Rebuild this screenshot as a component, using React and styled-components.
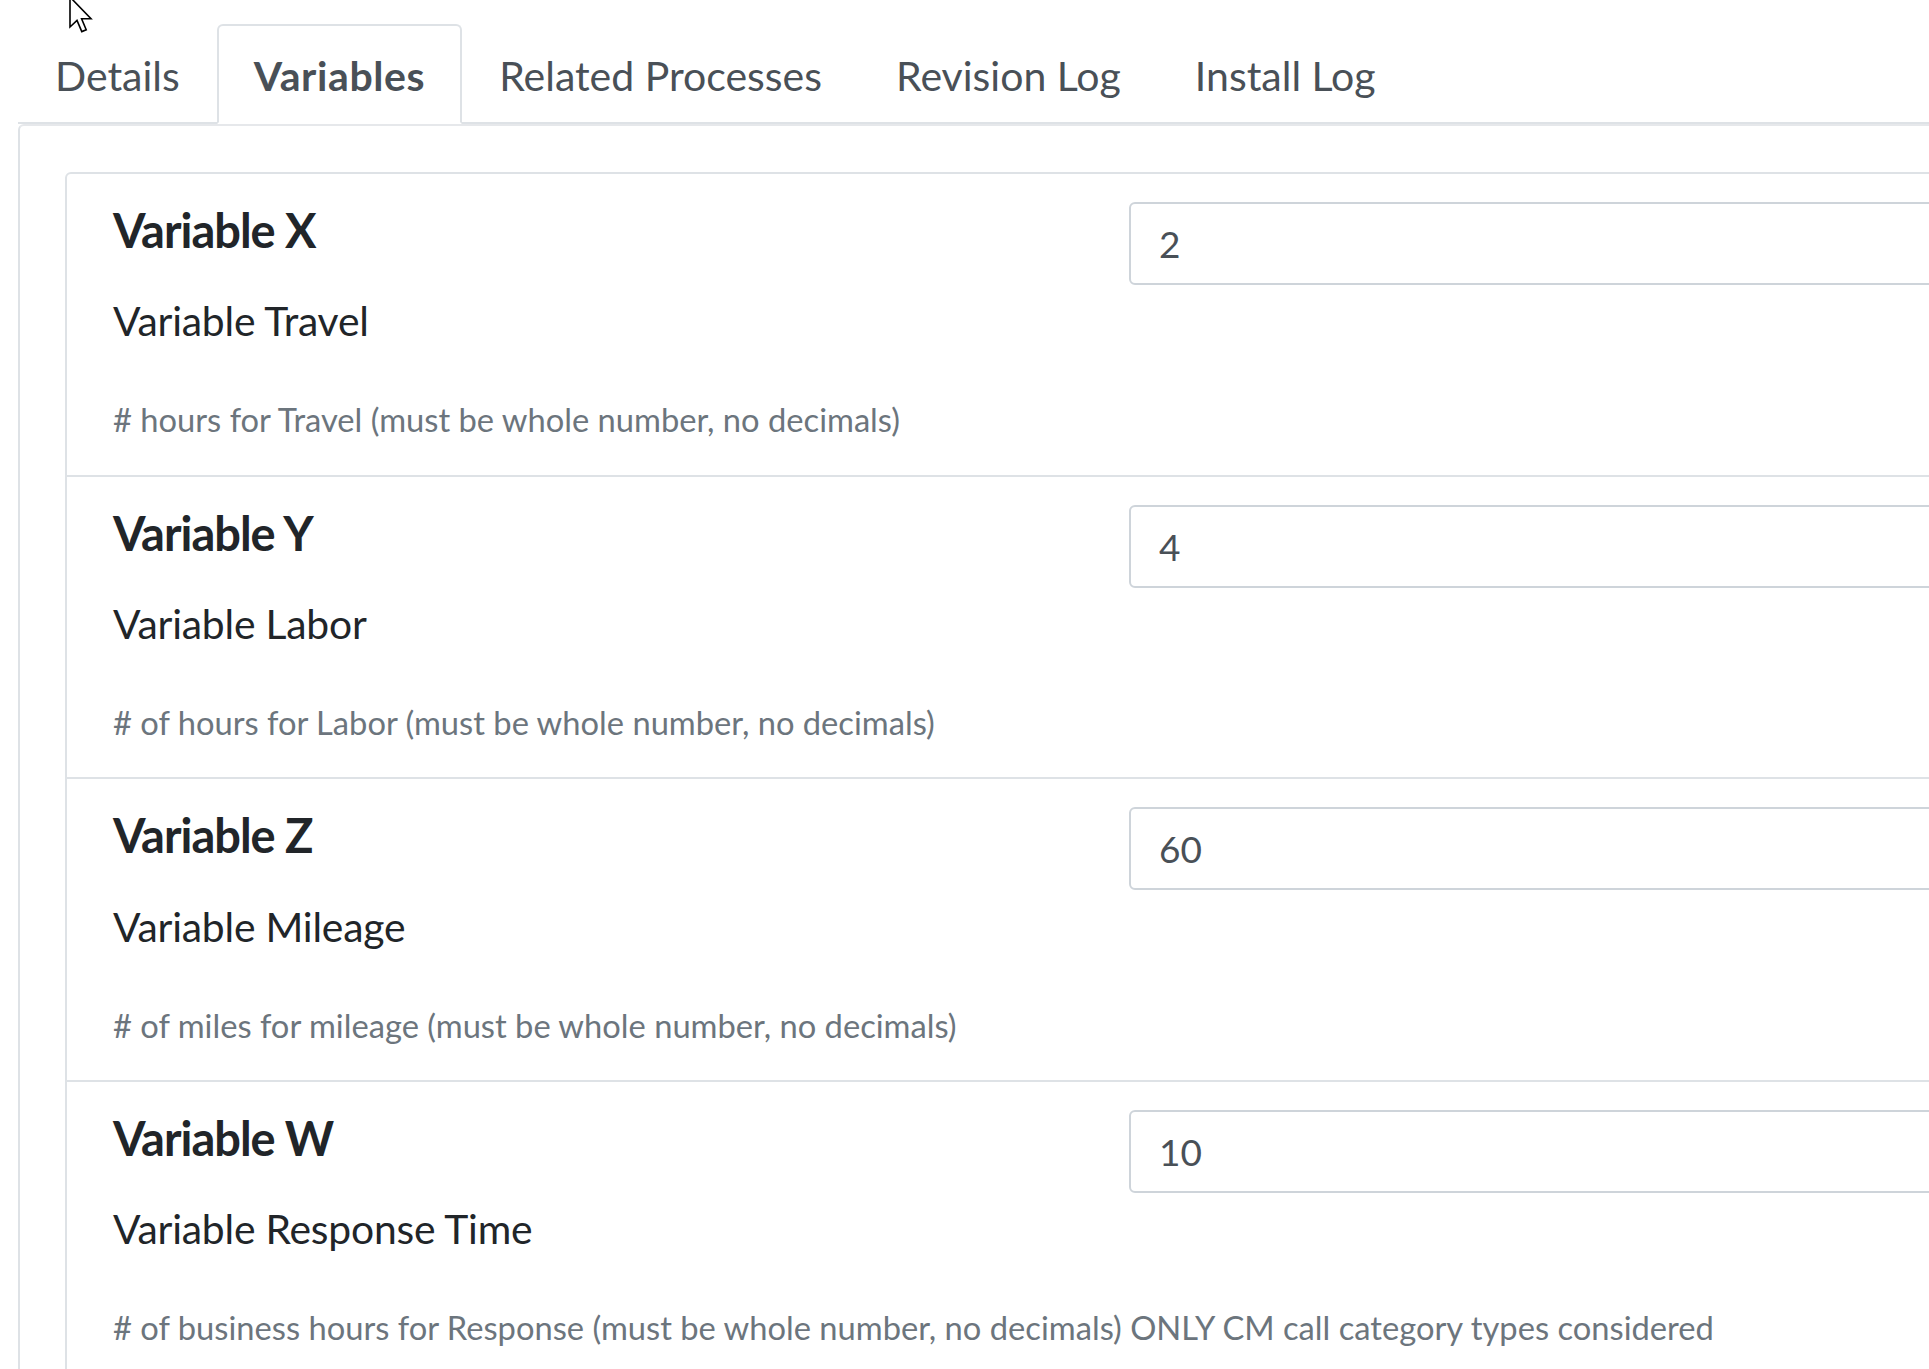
import React from 'react';
import styled, { createGlobalStyle } from 'styled-components';

const GlobalStyle = createGlobalStyle`
  html, body {
    margin: 0;
    padding: 0;
    overflow: hidden;
    background: #fff;
  }
  body {
    font-family: Lato, "Open Sans", sans-serif;
    color: #212529;
  }
  * {
    box-sizing: border-box;
  }
`;

const tabs = ['Details', 'Variables', 'Related Processes', 'Revision Log', 'Install Log'];

const variables = [
  {
    name: 'Variable X',
    label: 'Variable Travel',
    hint: '# hours for Travel (must be whole number, no decimals)',
    value: '2',
  },
  {
    name: 'Variable Y',
    label: 'Variable Labor',
    hint: '# of hours for Labor (must be whole number, no decimals)',
    value: '4',
  },
  {
    name: 'Variable Z',
    label: 'Variable Mileage',
    hint: '# of miles for mileage (must be whole number, no decimals)',
    value: '60',
  },
  {
    name: 'Variable W',
    label: 'Variable Response Time',
    hint: '# of business hours for Response (must be whole number, no decimals) ONLY CM call category types considered',
    value: '10',
  },
];

function Cursor() {
  return (
    <CursorMark width="26" height="38" viewBox="0 0 13 19">
      <path
        d="M0.5 0.5 L0.5 15.5 L4 12.2 L6.4 17.8 L8.6 16.9 L6.3 11.4 L11 11.4 Z"
        fill="#fff"
        stroke="#000"
        strokeWidth="0.8"
        strokeLinejoin="miter"
      />
    </CursorMark>
  );
}

export default function App() {
  return (
    <Page>
      <GlobalStyle />
      <Cursor />
      <TabBar>
        {tabs.map((t) => (
          <Tab key={t} $active={t === 'Variables'}>
            {t}
          </Tab>
        ))}
      </TabBar>
      <Panel>
        <Card>
          {variables.map((v) => (
            <Row key={v.name}>
              <Info>
                <Name>{v.name}</Name>
                <Label>{v.label}</Label>
                <Hint>{v.hint}</Hint>
              </Info>
              <Input type="text" defaultValue={v.value} />
            </Row>
          ))}
        </Card>
      </Panel>
    </Page>
  );
}

const Page = styled.div`
  position: relative;
  width: 2153px;
  padding-left: 18px;
`;

const CursorMark = styled.svg`
  position: absolute;
  left: 69px;
  top: -4px;
  z-index: 10;
`;

const TabBar = styled.nav`
  display: flex;
  padding-top: 24px;
  border-bottom: 2px solid #dee2e6;
`;

const Tab = styled.a`
  display: block;
  height: 100px;
  margin-bottom: -2px;
  padding: 19px 35px 0;
  font-size: 41px;
  line-height: 1.5;
  color: #495057;
  font-weight: ${(p) => (p.$active ? 700 : 400)};
  letter-spacing: ${(p) => (p.$active ? '0.6px' : '0')};
  background: ${(p) => (p.$active ? '#fff' : 'transparent')};
  border: 2px solid ${(p) => (p.$active ? '#dee2e6' : 'transparent')};
  border-bottom-color: ${(p) => (p.$active ? '#fff' : 'transparent')};
  border-radius: 6px 6px 0 0;
  cursor: pointer;
  white-space: nowrap;
`;

const Panel = styled.div`
  padding: 46px 0 0 45px;
  border-left: 2px solid #dee2e6;
  border-top: 2px solid #e6e8eb;
  border-top-left-radius: 6px;
`;

const Card = styled.div`
  border: 2px solid #dee2e6;
  border-radius: 6px;
  background: #fff;
`;

const Row = styled.div`
  display: grid;
  grid-template-columns: minmax(0, 1fr) minmax(0, 1fr);
  column-gap: 40px;
  align-items: start;
  padding: 28px 46px 35px;
  border-bottom: 2px solid #dee2e6;

  &:last-child {
    border-bottom: none;
  }
`;

const Info = styled.div`
  display: flex;
  flex-direction: column;
  align-items: flex-start;
`;

const Name = styled.h4`
  margin: 0 0 39px;
  font-size: 47px;
  font-weight: 700;
  line-height: 1.2;
  letter-spacing: -1px;
  color: #212529;
`;

const Label = styled.p`
  margin: 0 0 54px;
  font-size: 40.8px;
  line-height: 1.2;
  letter-spacing: -0.2px;
  color: #212529;
`;

const Hint = styled.small`
  display: block;
  font-size: 32.7px;
  line-height: 1.2;
  color: #6c757d;
  white-space: nowrap;
`;

const Input = styled.input`
  width: 100%;
  height: 83px;
  padding: 0 28px;
  font-family: inherit;
  font-size: 37px;
  color: #495057;
  background: #fff;
  border: 2px solid #ced4da;
  border-radius: 6px;
  outline: none;
`;
